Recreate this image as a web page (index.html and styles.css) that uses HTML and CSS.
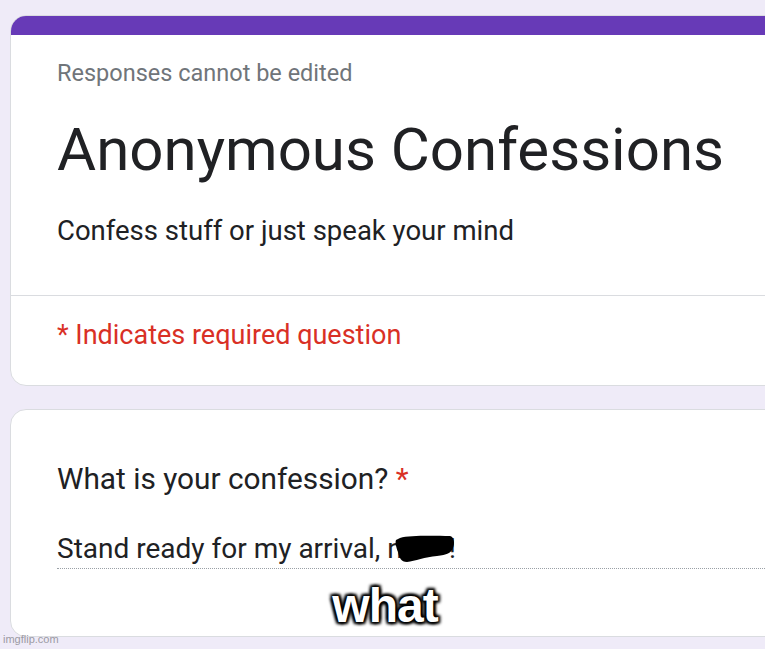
FILE: index.html
```html
<!DOCTYPE html>
<html>
<head>
<meta charset="utf-8">
<link rel="stylesheet" href="styles.css">
</head>
<body>
<div class="page">
  <section class="card header-card">
    <div class="accent"></div>
    <div class="head-body">
      <div class="note">Responses cannot be edited</div>
      <h1 class="title">Anonymous Confessions</h1>
      <div class="desc">Confess stuff or just speak your mind</div>
    </div>
    <div class="divider"></div>
    <div class="required">* Indicates required question</div>
  </section>
  <section class="card question-card">
    <div class="question">What is your confession? <span class="star">*</span></div>
    <div class="answer">Stand ready for my arrival, n<svg class="blob" width="60" height="27" viewBox="0 0 60 27"><path d="M5 3 C15 0 40 1 55 1 C59 2 60 8 58 13 C56 18 52 20 42 21 C30 22 20 26 12 27 C6 27 4 22 3 17 C1 12 0 7 1 5 Z" fill="#000"/></svg>!</div>
    <div class="caption">what</div>
  </section>
</div>
<div class="watermark">imgflip.com</div>
</body>
</html>
```
FILE: styles.css
```css
html, body {
  margin: 0;
  padding: 0;
  background: #efebf8;
  overflow: hidden;
  width: 765px;
  height: 649px;
}
body {
  font-family: Roboto, "Liberation Sans", sans-serif;
  color: #202124;
  position: relative;
}
.page {
  padding: 15px 0 0 10px;
  display: flex;
  flex-direction: column;
  gap: 23px;
}
.card {
  width: 820px;
  background: #fff;
  border: 1px solid #dadce0;
  border-radius: 16px;
  box-sizing: border-box;
  overflow: hidden;
}
.header-card {
  height: 371px;
}
.accent {
  height: 19px;
  background: #673ab7;
}
.head-body {
  padding: 23px 0 0 46px;
}
.note {
  font-size: 23.5px;
  line-height: 30px;
  color: #70757a;
}
.title {
  margin: 26px 0 0;
  font-size: 60px;
  font-weight: 400;
  line-height: 72px;
  color: #202124;
  white-space: nowrap;
}
.desc {
  margin-top: 28px;
  font-size: 27.5px;
  line-height: 34px;
}
.divider {
  margin-top: 47px;
  border-top: 1px solid #dadce0;
}
.required {
  padding: 22px 0 0 46px;
  font-size: 27px;
  line-height: 34px;
  color: #d93025;
}
.question-card {
  height: 228px;
  padding: 52px 0 0 46px;
  position: relative;
}
.question {
  font-size: 29.8px;
  line-height: 34px;
}
.star {
  color: #d93025;
}
.answer {
  margin-top: 36px;
  font-size: 28px;
  line-height: 34px;
  padding-bottom: 2px;
  border-bottom: 1px dotted #9aa0a6;
}
.blob {
  display: inline-block;
  margin: 0 -6px 0 -8px;
  vertical-align: -4px;
  position: relative;
  z-index: 1;
}
.caption {
  position: absolute;
  left: 0;
  width: 748px;
  top: 168px;
  text-align: center;
  font-family: "Liberation Sans", Arial, sans-serif;
  font-weight: 700;
  font-size: 48px;
  line-height: 56px;
  letter-spacing: -1px;
  color: #fff;
  text-shadow: 0 0 2px #000, 0 0 4px #000, 2px 2px 3px #000, -2px -2px 3px #000, 2px -2px 3px #000, -2px 2px 3px #000;
}
.watermark {
  position: absolute;
  left: 3px;
  top: 633px;
  font-family: "Liberation Sans", Arial, sans-serif;
  font-size: 11px;
  color: #9b9aa3;
}
```
